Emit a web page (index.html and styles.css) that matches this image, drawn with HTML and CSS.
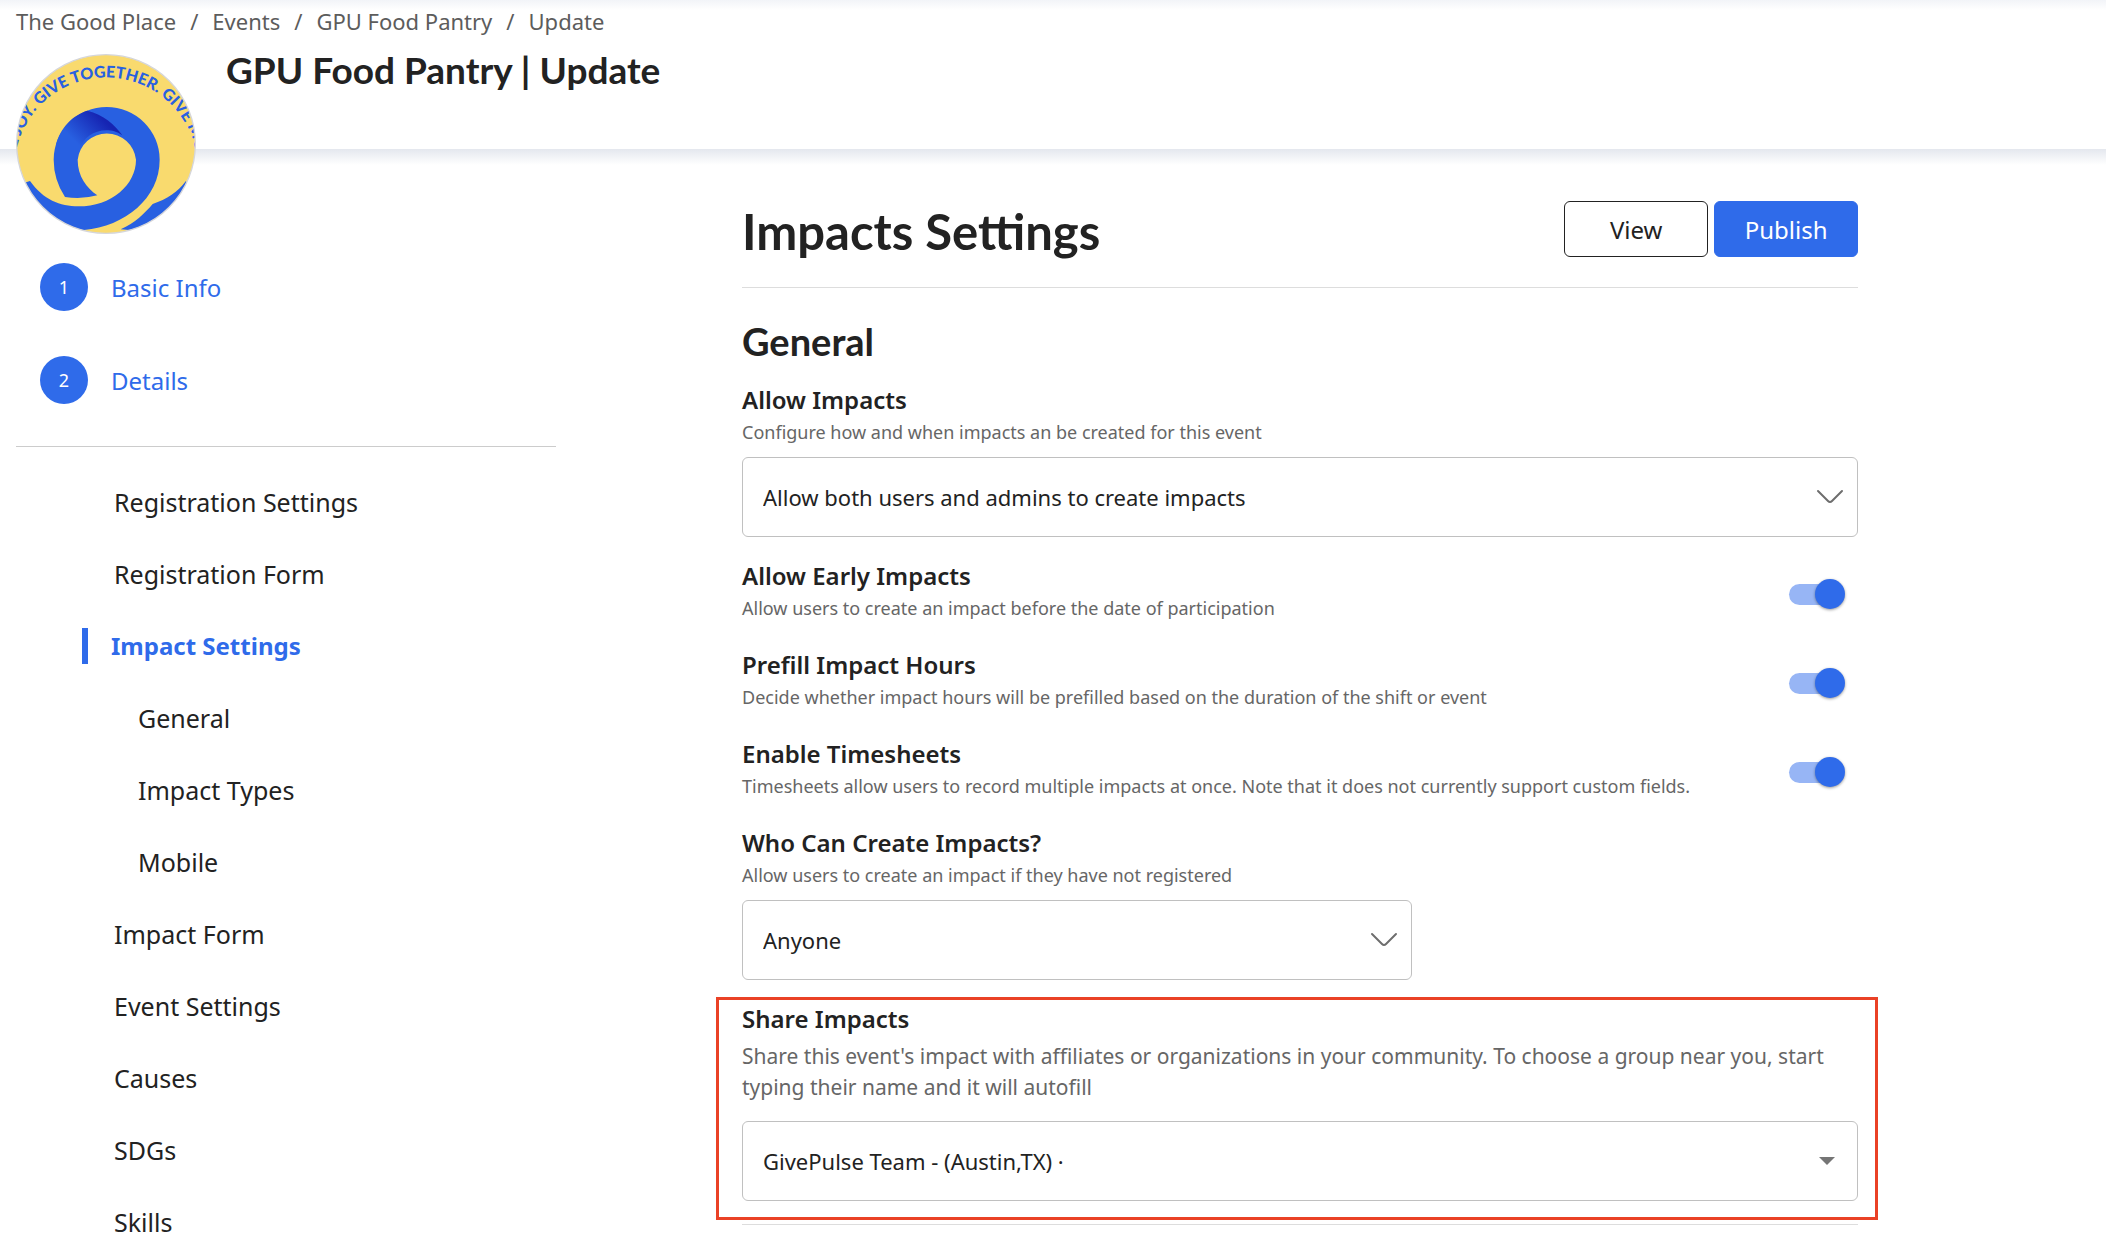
FILE: index.html
```html
<!DOCTYPE html>
<html lang="en">
<head>
    <meta charset="UTF-8">
    <meta name="viewport" content="width=device-width, initial-scale=1.0">
    <title>GPU Food Pantry | Update</title>
    <link rel="stylesheet" href="styles.css">
</head>
<body>
    <header class="page-header">
        <nav class="breadcrumb">
            <a href="#">The Good Place</a>
            <span>/</span>
            <a href="#">Events</a>
            <span>/</span>
            <a href="#">GPU Food Pantry</a>
            <span>/</span>
            <a href="#">Update</a>
        </nav>
        <div class="page-title">
            <svg class="avatar" viewBox="18 18 540 540">
                <defs>
                    <clipPath id="round"><circle cx="288" cy="288" r="268"/></clipPath>
                    <linearGradient id="fold" gradientUnits="userSpaceOnUse" x1="275" y1="210" x2="200" y2="285">
                        <stop offset="0" stop-color="#1624b2"/>
                        <stop offset="1" stop-color="#2860e1"/>
                    </linearGradient>
                    <path id="arc" d="M26 447 A275 275 0 1 1 550 447"/>
                </defs>
                <circle cx="288" cy="288" r="268" fill="#f9da6e"/>
                <g clip-path="url(#round)" fill="#2860e1">
                    <path d="M165 447 Q131 395 131 335 A159 158 0 0 1 290 177 A159 158 0 0 1 449 335 C449 450 345 535 222 546 L150 570 L20 460 L48 403 L60 399 C100 455 150 475 205 475 C305 475 378 410 378 335 A88 88 0 0 0 203 335 C203 385 230 420 262 442 Q215 455 165 447 Z"/>
                    <path d="M332 544 C375 525 405 495 428 468 C470 455 505 430 527 400 L560 420 L500 540 L360 560 L357 546 Z"/>
                    <path fill="url(#fold)" d="M232 188 C280 200 315 230 337 262 C320 250 305 247 290 247 C250 247 220 270 208 305 L138 290 C150 240 190 200 232 188 Z"/>
                    <text class="avatar-text"><textPath href="#arc" startOffset="50%" text-anchor="middle">GIVE JOY. GIVE TOGETHER. GIVE MORE.</textPath></text>
                </g>
                <circle cx="288" cy="288" r="268" fill="none" stroke="#d5d6da" stroke-width="4"/>
            </svg>
            <h1>GPU Food Pantry | Update</h1>
        </div>
    </header>

    <div class="layout">
        <aside class="sidebar">
            <div class="steps">
                <a href="#"><span class="step-number">1</span>Basic Info</a>
                <a href="#"><span class="step-number">2</span>Details</a>
            </div>
            <nav class="menu">
                <a href="#">Registration Settings</a>
                <a href="#">Registration Form</a>
                <a href="#" class="active">Impact Settings</a>
                <a href="#general" class="sub">General</a>
                <a href="#" class="sub">Impact Types</a>
                <a href="#" class="sub">Mobile</a>
                <a href="#">Impact Form</a>
                <a href="#">Event Settings</a>
                <a href="#">Causes</a>
                <a href="#">SDGs</a>
                <a href="#">Skills</a>
            </nav>
        </aside>

        <main class="content">
            <div class="content-header">
                <h2>Impacts Settings</h2>
                <div class="actions">
                    <button type="button" class="btn">View</button>
                    <button type="button" class="btn btn-primary">Publish</button>
                </div>
            </div>

            <h3 id="general">General</h3>

            <div class="field">
                <label for="allowImpacts">Allow Impacts</label>
                <p>Configure how and when impacts an be created for this event</p>
                <div class="select-box">
                    <select id="allowImpacts">
                        <option>Allow both users and admins to create impacts</option>
                    </select>
                    <svg class="chevron" viewBox="0 0 28 16"><path d="M2 2 L12 12 Q14 14 16 12 L26 2"/></svg>
                </div>
            </div>

            <div class="toggle-row">
                <div>
                    <label for="earlyImpacts">Allow Early Impacts</label>
                    <p>Allow users to create an impact before the date of participation</p>
                </div>
                <input type="checkbox" class="toggle" id="earlyImpacts" checked>
            </div>
            <div class="toggle-row">
                <div>
                    <label for="prefillHours">Prefill Impact Hours</label>
                    <p>Decide whether impact hours will be prefilled based on the duration of the shift or event</p>
                </div>
                <input type="checkbox" class="toggle" id="prefillHours" checked>
            </div>
            <div class="toggle-row">
                <div>
                    <label for="timesheets">Enable Timesheets</label>
                    <p>Timesheets allow users to record multiple impacts at once. Note that it does not currently support custom fields.</p>
                </div>
                <input type="checkbox" class="toggle" id="timesheets" checked>
            </div>

            <div class="field">
                <label for="whoCanCreate">Who Can Create Impacts?</label>
                <p>Allow users to create an impact if they have not registered</p>
                <div class="select-box select-short">
                    <select id="whoCanCreate">
                        <option>Anyone</option>
                    </select>
                    <svg class="chevron" viewBox="0 0 28 16"><path d="M2 2 L12 12 Q14 14 16 12 L26 2"/></svg>
                </div>
            </div>

            <div class="share">
                <label for="shareImpacts">Share Impacts</label>
                <p>Share this event's impact with affiliates or organizations in your community. To choose a group near you, start typing their name and it will autofill</p>
                <div class="select-box">
                    <input type="text" id="shareImpacts" value="GivePulse Team - (Austin,TX) ·">
                    <svg class="caret" viewBox="0 0 16 8"><path d="M0 0 H16 L8 8 Z"/></svg>
                </div>
            </div>
            <hr>
        </main>
    </div>
</body>
</html>
```
FILE: styles.css
```css
* {
    box-sizing: border-box;
}
body {
    margin: 0;
    background-color: #fff;
    color: #222;
    font-family: "Noto Sans", sans-serif;
    font-size: 24px;
}
a {
    color: inherit;
    text-decoration: none;
}
h1, h2, h3, p {
    margin: 0;
}
h1, h2, h3 {
    font-family: Lato, sans-serif;
    font-weight: bold;
}

/* header */
.page-header {
    padding: 7px 16px 0;
    background: linear-gradient(#f2f4f8, #fff 10px);
}
.page-header::after {
    content: "";
    display: block;
    height: 16px;
    margin: 0 -16px;
    background: linear-gradient(#e4e7ee, #fff);
}
.breadcrumb {
    display: flex;
    gap: 14px;
    font-size: 22px;
    line-height: 28px;
    color: #5c5c5c;
}
.page-title {
    display: flex;
    gap: 30px;
    margin-top: 19px;
}
.page-title h1 {
    font-size: 37px;
    line-height: 32px;
}
.avatar {
    position: relative;
    width: 180px;
    height: 180px;
    margin-bottom: -85px;
}
.avatar-text {
    font-family: Lato, sans-serif;
    font-size: 48px;
    font-weight: 900;
}

.layout {
    display: flex;
    gap: 186px;
}

/* sidebar */
.sidebar {
    width: 540px;
    margin-left: 16px;
    padding-top: 98px;
}
.steps {
    display: flex;
    flex-direction: column;
    gap: 45px;
    padding: 0 0 42px 24px;
    border-bottom: 1px solid #ccc;
}
.steps a {
    display: flex;
    align-items: center;
    gap: 23px;
    color: #2f6bea;
}
.step-number {
    width: 48px;
    line-height: 48px;
    border-radius: 50%;
    background-color: #2f6bea;
    color: #fff;
    font-size: 18px;
    text-align: center;
}
.menu {
    display: flex;
    flex-direction: column;
    gap: 36px;
    padding-top: 37px;
}
.menu a {
    padding-left: 98px;
    font-size: 25px;
    line-height: 36px;
}
.menu .sub {
    padding-left: 122px;
}
.menu .active {
    margin-left: 66px;
    padding-left: 23px;
    border-left: 6px solid #2f6bea;
    color: #2f6bea;
    font-size: 24px;
    font-weight: bold;
}

/* content */
.content {
    width: 53%;
    padding-top: 36px;
}
.content-header {
    display: flex;
    align-items: center;
    justify-content: space-between;
    padding-bottom: 30px;
    border-bottom: 1px solid #ddd;
}
.content-header h2 {
    padding-top: 4px;
    font-size: 49px;
    line-height: 52px;
}
.actions {
    display: flex;
    gap: 6px;
}
.btn {
    width: 144px;
    height: 56px;
    border: 1px solid #222;
    border-radius: 6px;
    background-color: #fff;
    color: #222;
    font-family: inherit;
    font-size: 24px;
    cursor: pointer;
}
.btn-primary {
    border-color: #2f6bea;
    background-color: #2f6bea;
    color: #fff;
}
h3 {
    margin: 34px 0 24px;
    font-size: 38px;
    line-height: 38px;
}
label {
    display: block;
    font-weight: 600;
    line-height: 32px;
}
p {
    margin-top: 2px;
    color: #666;
    font-size: 18px;
    line-height: 28px;
}
.field {
    margin-bottom: 23px;
}
.select-box {
    position: relative;
    margin-top: 11px;
}
.select-short {
    width: 60%;
}
.select-box select, .select-box input {
    display: block;
    width: 100%;
    height: 80px;
    padding: 0 20px;
    border: 1px solid #c0c0c0;
    border-radius: 6px;
    background-color: #fff;
    color: #222;
    font-family: inherit;
    font-size: 22px;
    appearance: none;
}
.chevron, .caret {
    position: absolute;
    top: 50%;
    transform: translateY(-50%);
    pointer-events: none;
}
.chevron {
    right: 14px;
    width: 28px;
    fill: none;
    stroke: #6e6e6e;
    stroke-width: 2;
    stroke-linecap: round;
}
.caret {
    right: 23px;
    width: 16px;
    fill: #757575;
}
.toggle-row {
    display: flex;
    align-items: center;
    justify-content: space-between;
    margin-bottom: 27px;
}
.toggle {
    position: relative;
    flex: none;
    width: 56px;
    height: 30px;
    margin: 6px 13px 0 0;
    appearance: none;
    cursor: pointer;
}
.toggle::before {
    content: "";
    position: absolute;
    top: 5px;
    left: 0;
    width: 52px;
    height: 21px;
    border-radius: 11px;
    background-color: #bbb;
}
.toggle::after {
    content: "";
    position: absolute;
    left: 0;
    width: 30px;
    height: 30px;
    border-radius: 50%;
    background-color: #fafafa;
    box-shadow: 0 1px 3px rgba(0, 0, 0, 0.4);
}
.toggle:checked::before {
    background-color: #97b5f5;
}
.toggle:checked::after {
    left: 26px;
    background-color: #2f6bea;
}
.share {
    margin: -6px -20px 4px -26px;
    padding: 3px 17px 16px 23px;
    border: 3px solid #ea4126;
}
.share p {
    margin: 6px 0 18px;
    font-size: 21px;
    line-height: 31px;
}
hr {
    margin: 0;
    border: 0;
    border-top: 1px solid #ddd;
}
```
